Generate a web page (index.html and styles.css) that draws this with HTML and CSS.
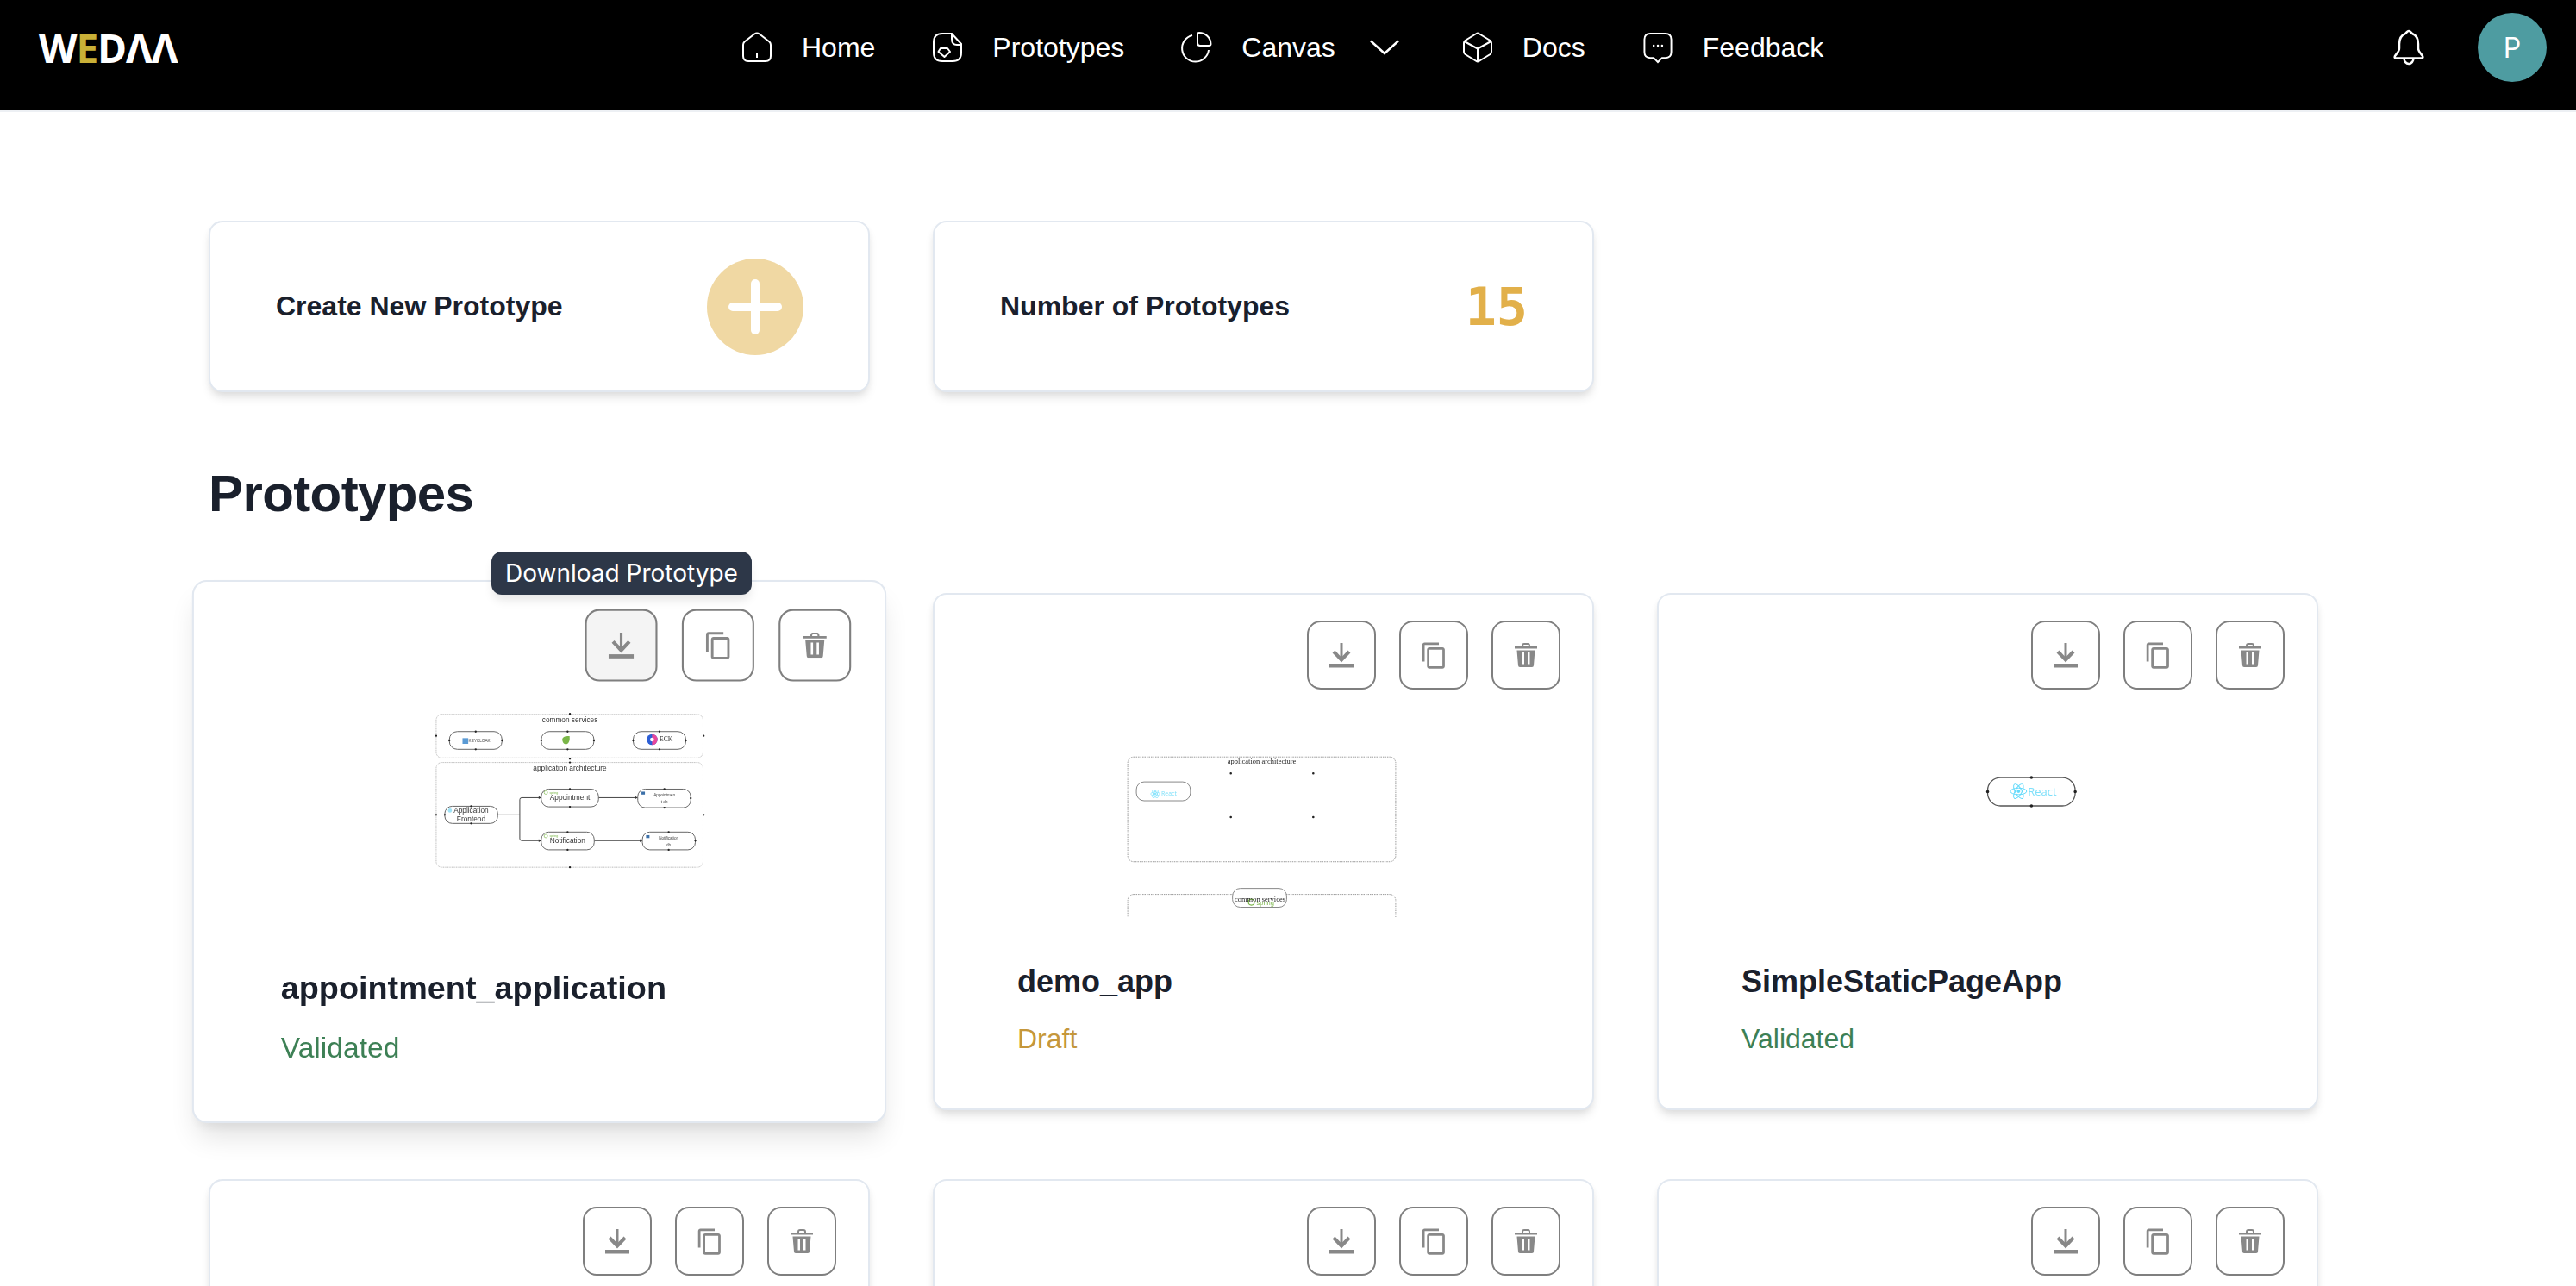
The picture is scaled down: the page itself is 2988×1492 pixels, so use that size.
FILE: index.html

```html
<!DOCTYPE html>
<html lang="en">
<head>
  <meta charset="UTF-8" />
  <meta name="viewport" content="width=device-width, initial-scale=1.0" />
  <title>WeDAA – Prototypes</title>
  <link rel="stylesheet" href="styles.css">
</head>
<body>
  <header class="topbar">
    <div class="logo"><span>W</span><span class="logo-e">E</span><span>D</span><span>Λ</span><span>Λ</span></div>

    <nav class="nav">
      <a class="nav-item">
        <svg class="nav-icon" viewBox="0 0 36 36"><path d="M2 15Q2 13 3.5 11.5L15 2.5Q18 .5 21 2.5L32.5 11.5Q34 13 34 15V28Q34 34 28 34H8Q2 34 2 28Z"/><path d="M18 25V30"/></svg>
        Home
      </a>
      <a class="nav-item">
        <svg class="nav-icon" viewBox="0 0 36 36"><path d="M23 2H12Q2 2 2 12V24Q2 34 12 34H24Q34 34 34 24V14Z"/><path d="M23 2V8Q23 15 29 15H34"/><path d="M10 19H18L21 23L14.5 29L7.500 23Z" stroke-linejoin="round"/></svg>
        Prototypes
      </a>
      <a class="nav-item">
        <svg class="nav-icon" viewBox="0 0 36 36"><path d="M13 4A15.500 15.500 0 1 0 32 21"/><path d="M19 3Q19 1 21 1A13.500 13.500 0 0 1 34.500 14Q34.500 16 32 16H22Q19 16 19 13Z"/></svg>
        Canvas
        <svg class="nav-chevron" viewBox="0 0 36 18"><path d="M2 1.500L18 16L34 1.500"/></svg>
      </a>
      <a class="nav-item">
        <svg class="nav-icon" viewBox="0 0 36 36"><path d="M16.500 2L3.500 10Q2 11 2 13V23Q2 25 3.500 26L16.500 34Q18 35 19.500 34L32.500 26Q34 25 34 23V13Q34 11 32.500 10L19.500 2Q18 1 16.500 2Z"/><path d="M2.500 11L18 19.500L33.500 11M18 19.500V34.500"/></svg>
        Docs
      </a>
      <a class="nav-item">
        <svg class="nav-icon" viewBox="0 0 36 37"><path d="M9 2H27Q34 2 34 9V24Q34 31 27 31H23L18 36L13 31H9Q2 31 2 24V9Q2 2 9 2Z"/><path class="dots" d="M13 16.500H13.100M18 16.500H18.100M23 16.500H23.100"/></svg>
        Feedback
      </a>
    </nav>

    <div class="topbar-right">
      <svg class="bell" viewBox="0 0 36 42"><path d="M18 2C20 2 20.500 4 22 5C27 7 29 11 29 17V22C29 26 33 29 34 31Q35 33.500 33 33.500H3Q1 33.500 2 31C3 29 7 26 7 22V17C7 11 9 7 14 5C15.500 4 16 2 18 2Z"/><path d="M12.500 33.500A5.500 6.500 0 0 0 23.500 33.500"/></svg>
      <div class="avatar">P</div>
    </div>
  </header>

  <main class="content">
    <section class="stats">
      <div class="stat-card">
        <span class="stat-label">Create New Prototype</span>
        <div class="plus-btn"><span class="plus-h"></span><span class="plus-v"></span></div>
      </div>
      <div class="stat-card">
        <span class="stat-label">Number of Prototypes</span>
        <span class="stat-num">15</span>
      </div>
    </section>

    <h1 class="section-title">Prototypes</h1>

    <section class="proto-grid">
      <div class="tooltip">Download Prototype</div>

      <article class="proto-card is-hover">
        <div class="actions">
          <button class="icon-btn is-hover"><svg class="ic-download" viewBox="0 0 28 30"><use href="#i-download"/></svg></button>
          <button class="icon-btn"><svg class="ic-copy" viewBox="0 0 24 24"><use href="#i-copy"/></svg></button>
          <button class="icon-btn"><svg class="ic-trash" viewBox="0 0 26 28"><use href="#i-trash"/></svg></button>
        </div>
        <div class="preview">
          <svg class="thumb" viewBox="0 0 804 277">
            <g transform="translate(266 20.400) scale(.33333)">
              <rect class="group" x="48" y="52" width="932" height="152" rx="20"/>
              <text class="d-label" x="515" y="80">common services</text>
              <rect class="node" x="94" y="112" width="184" height="62" rx="28"/>
              <rect class="node" x="415" y="112" width="184" height="62" rx="28"/>
              <rect class="node" x="736" y="112" width="184" height="62" rx="28"/>
              <rect x="140" y="135" width="20" height="20" fill="#5b9bd5"/>
              <text class="d-small" x="199" y="149" fill="#777">KEYCLOAK</text>
              <path d="M488 140Q490 126 514 128Q516 152 504 156Q490 158 488 140Z" fill="#7ab648"/>
              <circle cx="802" cy="140" r="19" fill="#2d5fd6"/>
              <path d="M802 121A19 19 0 0 1 821 140H802ZM802 159A19 19 0 0 0 821 140H802Z" fill="#e8479b"/>
              <circle cx="802" cy="140" r="7" fill="#fff"/>
              <text class="d-eck" x="828" y="147">ECK</text>

              <rect class="group" x="48" y="220" width="932" height="366" rx="20"/>
              <text class="d-label" x="515" y="247">application architecture</text>
              <path class="edge" d="M263 403H340M415 343H347Q340 343 340 350V486Q340 493 347 493H415M615 343H752M600 493H768"/>
              <path class="arrow" d="M415 343l-9-5v10zM752 343l-9-5v10zM415 493l-9-5v10zM768 493l-9-5v10z"/>
              <rect class="node" x="78" y="373" width="185" height="60" rx="26"/>
              <rect class="node" x="415" y="313" width="200" height="62" rx="26"/>
              <rect class="node" x="752" y="313" width="185" height="65" rx="26"/>
              <rect class="node" x="415" y="463" width="185" height="62" rx="26"/>
              <rect class="node" x="768" y="463" width="185" height="62" rx="26"/>
              <circle cx="96" cy="388" r="7" fill="#9fe3f7"/>
              <text class="d-label" x="170" y="395">Application</text>
              <text class="d-label" x="170" y="425">Frontend</text>
              <text class="d-label" x="515" y="350">Appointment</text>
              <text class="d-label" x="507" y="502">Notification</text>
              <circle cx="431" cy="325" r="6" fill="none" stroke="#7ab648" stroke-width="2"/>
              <circle cx="431" cy="477" r="6" fill="none" stroke="#7ab648" stroke-width="2"/>
              <text class="d-tiny" x="444" y="329" fill="#7ab648">spring</text>
              <text class="d-tiny" x="444" y="481" fill="#7ab648">spring</text>
              <rect x="765" y="322" width="12" height="10" fill="#3b6fa8"/>
              <rect x="781" y="474" width="12" height="10" fill="#3b6fa8"/>
              <text class="d-small" x="845" y="340">Appointmen</text>
              <text class="d-small" x="845" y="362">t db</text>
              <text class="d-small" x="860" y="490">Notification</text>
              <text class="d-small" x="860" y="512">db</text>
              <path class="pins" d="M515 50h.1M48 127h.1M982 127h.1M515 207h.1M515 220h.1M48 403h.1M982 403h.1M515 586h.1M186 112h.1M186 174h.1M94 143h.1M278 143h.1M507 112h.1M507 174h.1M415 143h.1M599 143h.1M828 112h.1M828 174h.1M736 143h.1M920 143h.1M170 373h.1M170 433h.1M78 403h.1M515 313h.1M515 375h.1M845 313h.1M845 378h.1M937 345h.1M507 463h.1M507 525h.1M860 463h.1M860 525h.1M953 493h.1"/>
            </g>
          </svg>
        </div>
        <h3 class="proto-name">appointment_application</h3>
        <p class="status validated">Validated</p>
      </article>

      <article class="proto-card">
        <div class="actions">
          <button class="icon-btn"><svg class="ic-download" viewBox="0 0 28 30"><use href="#i-download"/></svg></button>
          <button class="icon-btn"><svg class="ic-copy" viewBox="0 0 24 24"><use href="#i-copy"/></svg></button>
          <button class="icon-btn"><svg class="ic-trash" viewBox="0 0 26 28"><use href="#i-trash"/></svg></button>
        </div>
        <div class="preview">
          <svg class="thumb" viewBox="0 0 766 264">
            <rect class="group thin" x="225" y="78" width="312" height="122" rx="7"/>
            <rect class="group thin" x="225" y="238" width="312" height="60" rx="7"/>
            <text class="d-serif" x="381" y="86">application architecture</text>
            <path class="pins thin" d="M345 97h.1M441 97h.1M345 148h.1M441 148h.1"/>
            <rect class="node thin" x="235" y="107" width="63" height="22" rx="9"/>
            <g transform="translate(257 121) scale(.55)"><use href="#i-atom"/></g>
            <text class="d-react" x="264" y="123">React</text>
            <rect class="node thin" x="347" y="231" width="63" height="22" rx="9"/>
            <circle cx="369" cy="247" r="3.500" fill="none" stroke="#7ab648" stroke-width="1.200"/>
            <text class="d-spring" x="375" y="250">spring</text>
            <text class="d-serif" x="379" y="246">common services</text>
          </svg>
        </div>
        <h3 class="proto-name">demo_app</h3>
        <p class="status draft">Draft</p>
      </article>

      <article class="proto-card">
        <div class="actions">
          <button class="icon-btn"><svg class="ic-download" viewBox="0 0 28 30"><use href="#i-download"/></svg></button>
          <button class="icon-btn"><svg class="ic-copy" viewBox="0 0 24 24"><use href="#i-copy"/></svg></button>
          <button class="icon-btn"><svg class="ic-trash" viewBox="0 0 26 28"><use href="#i-trash"/></svg></button>
        </div>
        <div class="preview">
          <svg class="thumb" viewBox="0 0 766 264">
            <rect class="node mid" x="383" y="102" width="102" height="33" rx="15"/>
            <g transform="translate(419 118)"><use href="#i-atom"/></g>
            <text class="d-react big" x="430" y="123">React</text>
            <path class="pins mid" d="M434 102h.1M434 135h.1M383 118.500h.1M485 118.500h.1"/>
          </svg>
        </div>
        <h3 class="proto-name">SimpleStaticPageApp</h3>
        <p class="status validated">Validated</p>
      </article>

      <article class="proto-card">
        <div class="actions">
          <button class="icon-btn"><svg class="ic-download" viewBox="0 0 28 30"><use href="#i-download"/></svg></button>
          <button class="icon-btn"><svg class="ic-copy" viewBox="0 0 24 24"><use href="#i-copy"/></svg></button>
          <button class="icon-btn"><svg class="ic-trash" viewBox="0 0 26 28"><use href="#i-trash"/></svg></button>
        </div>
      </article>
      <article class="proto-card">
        <div class="actions">
          <button class="icon-btn"><svg class="ic-download" viewBox="0 0 28 30"><use href="#i-download"/></svg></button>
          <button class="icon-btn"><svg class="ic-copy" viewBox="0 0 24 24"><use href="#i-copy"/></svg></button>
          <button class="icon-btn"><svg class="ic-trash" viewBox="0 0 26 28"><use href="#i-trash"/></svg></button>
        </div>
      </article>
      <article class="proto-card">
        <div class="actions">
          <button class="icon-btn"><svg class="ic-download" viewBox="0 0 28 30"><use href="#i-download"/></svg></button>
          <button class="icon-btn"><svg class="ic-copy" viewBox="0 0 24 24"><use href="#i-copy"/></svg></button>
          <button class="icon-btn"><svg class="ic-trash" viewBox="0 0 26 28"><use href="#i-trash"/></svg></button>
        </div>
      </article>
    </section>
  </main>

  <!-- shared icons -->
  <svg class="sprites" aria-hidden="true">
    <symbol id="i-download" viewBox="0 0 28 30">
      <path d="M14 1V20" fill="none" stroke="currentColor" stroke-width="3"/>
      <path d="M5 11L14 20.500L23 11" fill="none" stroke="currentColor" stroke-width="4"/>
      <rect y="25" width="28" height="4.500" fill="currentColor"/>
    </symbol>
    <symbol id="i-copy" viewBox="0 0 24 24">
      <path fill="currentColor" d="M16 1H4c-1.100 0-2 .9-2 2v14h2V3h12V1zm3 4H8c-1.100 0-2 .9-2 2v14c0 1.100.9 2 2 2h11c1.100 0 2-.9 2-2V7c0-1.100-.9-2-2-2zm0 16H8V7h11v14z"/>
    </symbol>
    <symbol id="i-trash" viewBox="0 0 26 28">
      <path fill="currentColor" d="M8 4V3Q8 0 11 0H15Q18 0 18 3V4H26V6.500H0V4ZM10 4H16V3Q16 2 15 2H11Q10 2 10 3ZM2.500 8.500H23.500L22 26Q22 28 20 28H6Q4 28 4 26ZM8.500 11V24.500H11V11ZM15 11V24.500H17.500V11Z" fill-rule="evenodd"/>
    </symbol>
    <g id="i-atom" fill="none" stroke="#61dafb" stroke-width="1">
      <ellipse rx="9.500" ry="3.800"/>
      <ellipse rx="9.500" ry="3.800" transform="rotate(60)"/>
      <ellipse rx="9.500" ry="3.800" transform="rotate(120)"/>
      <circle r="1.500" fill="#61dafb"/>
    </g>
  </svg>
</body>
</html>
```

FILE: styles.css

```css
* { box-sizing: border-box; }
html, body { height: 100%; }
body { margin: 0; overflow: hidden; background: #fff; color: #1a202c; font-family: "Liberation Sans", Arial, sans-serif; }

/* top bar */
.topbar { display: flex; align-items: center; height: 130px; padding: 0 34px 18px 45px; background: #000; color: #fff; border-bottom: 2px solid #edf0f4; }
.logo { display: flex; width: 162px; font-family: "Noto Sans", sans-serif; font-size: 46px; font-weight: 700; letter-spacing: -1px; line-height: 1; color: #fff; }
.logo-e { color: #c9b037; }
.nav { display: flex; align-items: center; gap: 66px; margin-left: 653px; }
.nav-item { display: flex; align-items: center; gap: 34px; font-size: 32px; line-height: 40px; color: #fff; }
.nav-icon { width: 36px; height: 36px; fill: none; stroke: #fff; stroke-width: 2; overflow: visible; }
.nav-icon .dots { stroke-width: 2.500; stroke-linecap: round; }
.nav-chevron { width: 36px; height: 18px; margin: 0 6px 0 5px; fill: none; stroke: #fff; stroke-width: 2.500; }
.topbar-right { display: flex; align-items: center; gap: 62px; margin-left: auto; }
.bell { width: 36px; height: 42px; fill: none; stroke: #fff; stroke-width: 2.500; }
.avatar { display: flex; align-items: center; justify-content: center; width: 80px; height: 80px; border-radius: 50%; background: #4e9ca1; font-family: Inter, sans-serif; font-size: 32px; color: #fff; }

/* page */
.content { padding: 126px 0 0 242px; }
.stats { display: grid; grid-template-columns: repeat(2, 767px); gap: 73px; }
.stat-card { display: flex; align-items: center; justify-content: space-between; height: 199px; padding: 0 75px 0 76px; background: #fff; border: 2px solid #e2e8f0; border-radius: 16px; box-shadow: 0 8px 12px -2px rgba(0,0,0,.1), 0 4px 8px -2px rgba(0,0,0,.06); }
.stat-label { font-size: 32px; font-weight: 700; }
.stat-num { font-family: "DejaVu Sans Mono", monospace; font-size: 60px; font-weight: 700; line-height: 1; color: #e2b04a; }
.plus-btn { position: relative; width: 112px; height: 112px; border-radius: 50%; background: #f0d8a3; }
.plus-h, .plus-v { position: absolute; background: #fff; border-radius: 5px; }
.plus-h { left: 25px; top: 51px; width: 62px; height: 10px; }
.plus-v { left: 51px; top: 24px; width: 10px; height: 64px; }
.section-title { margin: 82px 0 79px; font-size: 60px; font-weight: 700; letter-spacing: -.6px; line-height: 72px; }

/* prototype cards */
.proto-grid { position: relative; display: grid; grid-template-columns: repeat(3, 767px); gap: 80px 73px; }
.proto-card { height: 600px; background: #fff; border: 2px solid #e2e8f0; border-radius: 16px; box-shadow: 0 8px 12px -2px rgba(0,0,0,.1), 0 4px 8px -2px rgba(0,0,0,.06); }
.proto-card.is-hover { position: relative; transform: scale(1.05); box-shadow: 0 20px 30px -6px rgba(0,0,0,.12), 0 8px 12px -4px rgba(0,0,0,.06); }
.actions { display: flex; justify-content: flex-end; gap: 27px; padding: 30px 37px 0 0; }
.icon-btn { display: flex; align-items: center; justify-content: center; width: 80px; height: 80px; padding: 0; background: #fff; border: 2px solid #7f7f7f; border-radius: 16px; color: #888; }
.icon-btn.is-hover { background: #f4f4f4; }
.ic-download { width: 28px; height: 30px; }
.ic-copy { width: 33px; height: 33px; }
.ic-trash { width: 26px; height: 28px; }
.preview { height: 264px; overflow: hidden; }
.thumb { display: block; width: 763px; height: 264px; filter: blur(.4px); }
.proto-name { margin: 53px 0 0 96px; font-size: 36px; font-weight: 700; line-height: 44px; }
.status { margin: 24px 0 0 96px; font-size: 32px; line-height: 40px; }
.validated { color: #3d8055; }
.draft { color: #c5973b; }
.tooltip { position: absolute; z-index: 5; left: 328px; top: -48px; height: 50px; padding: 0 16px; border-radius: 12px; background: #2d3748; color: #fff; font-family: Inter, sans-serif; font-size: 28px; line-height: 50px; box-shadow: 0 8px 12px -2px rgba(0,0,0,.1); }

/* diagram thumbnails */
.group { fill: none; stroke: #999; stroke-width: 2; stroke-dasharray: 3 2; }
.group.thin { stroke-width: 1; stroke-dasharray: 1.500 1; }
.node { fill: #fff; stroke: #666; stroke-width: 3; }
.node.thin { stroke: #888; stroke-width: 1; }
.node.mid { stroke: #555; stroke-width: 1.300; }
.edge { fill: none; stroke: #444; stroke-width: 3; }
.arrow { fill: #333; }
.pins { fill: none; stroke: #222; stroke-width: 7; stroke-linecap: round; }
.pins.thin { stroke-width: 2.500; }
.pins.mid { stroke-width: 3.500; }
.d-label { font-size: 25px; text-anchor: middle; fill: #333; }
.d-small { font-size: 14px; text-anchor: middle; fill: #444; }
.d-tiny { font-size: 11px; }
.d-eck { font-family: "Liberation Serif", serif; font-size: 23px; fill: #333; }
.d-serif { font-family: "Liberation Serif", serif; font-size: 8.500px; text-anchor: middle; fill: #222; }
.d-react { font-family: "Open Sans", sans-serif; font-size: 7px; fill: #7fe0fa; }
.d-react.big { font-size: 13px; }
.d-spring { font-size: 7.500px; fill: #7ab648; }
.sprites { position: absolute; width: 0; height: 0; }
```
